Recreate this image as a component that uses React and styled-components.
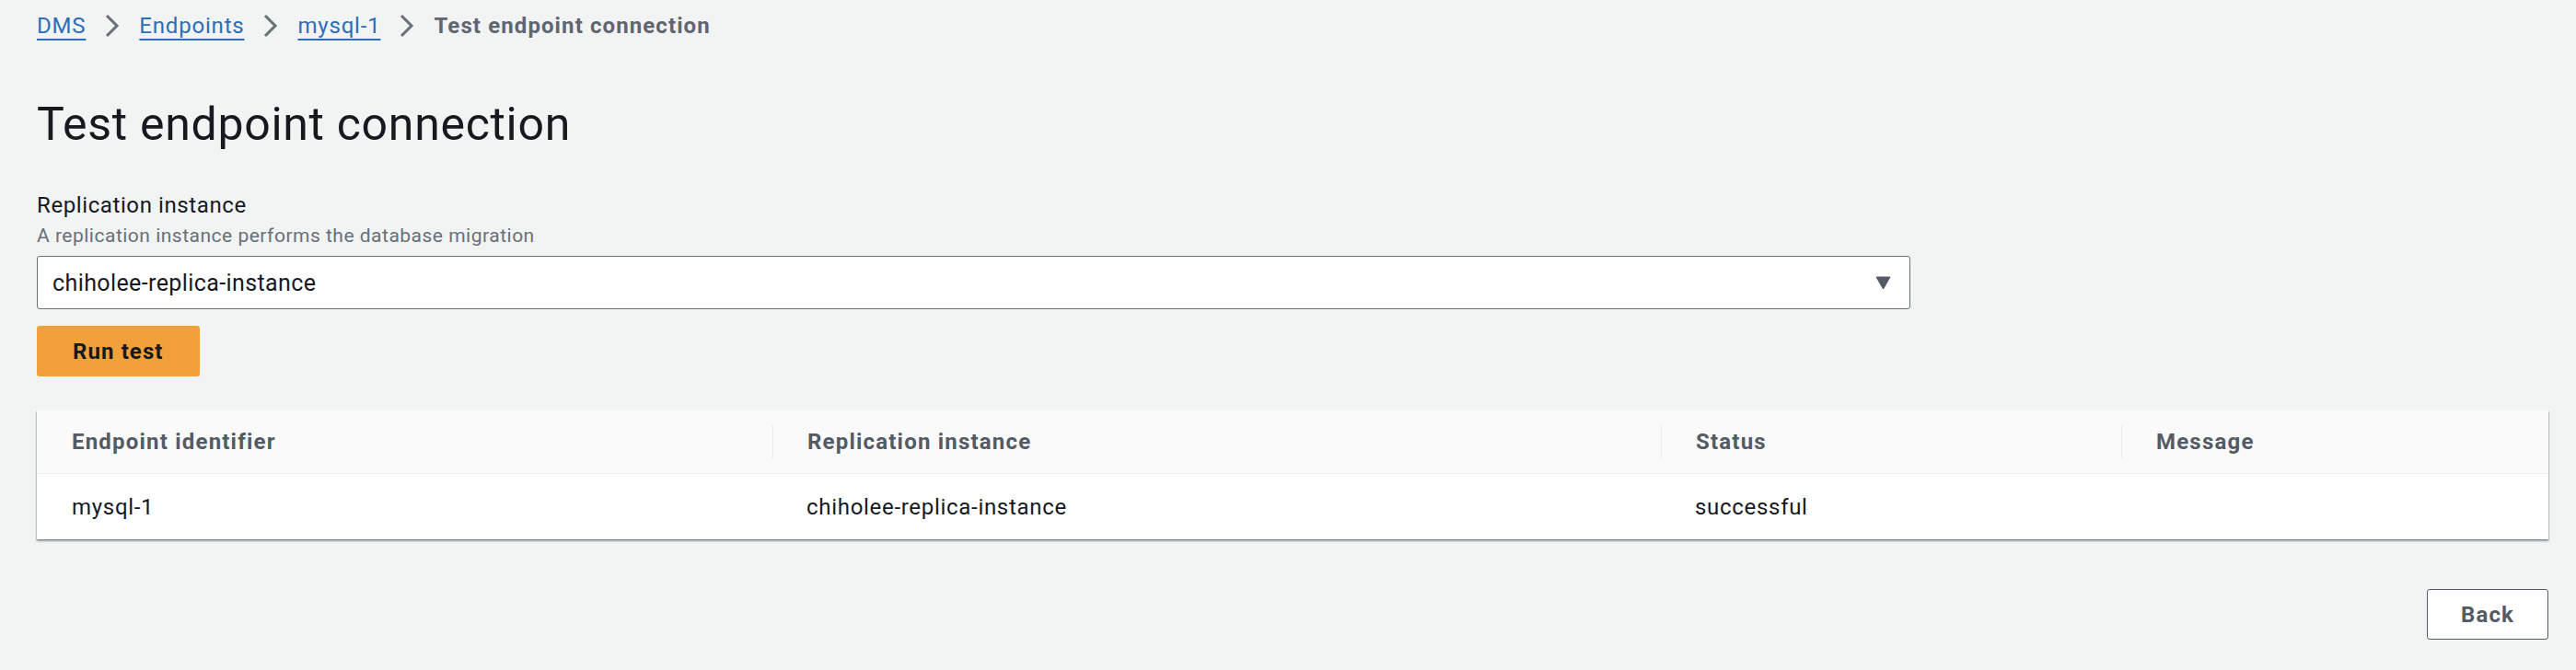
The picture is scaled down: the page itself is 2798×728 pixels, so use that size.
import { createGlobalStyle, styled } from "styled-components";

const GlobalStyle = createGlobalStyle`
  html, body {
    margin: 0;
    padding: 0;
    background: #f2f3f3;
  }
  body {
    font-family: Roboto, "Liberation Sans", sans-serif;
    color: #16191f;
    letter-spacing: 0.5px;
  }
`;

const Page = styled.main`
  box-sizing: border-box;
  height: 728px;
  padding: 10px 30px 0 40px;
  display: flex;
  flex-direction: column;
`;

const Crumbs = styled.nav`
  display: flex;
  align-items: center;
  height: 36px;
  font-size: 24px;
  line-height: 36px;
`;

const CrumbLink = styled.a`
  color: #2d6eb9;
  letter-spacing: 0.8px;
  text-decoration: underline;
  text-decoration-thickness: 2px;
  text-underline-offset: 6px;
`;

const CrumbCurrent = styled.span`
  color: #5f6670;
  font-weight: 700;
  letter-spacing: 1.1px;
`;

const Chevron = styled.svg`
  width: 17px;
  height: 26px;
  margin: 0 21px 0 20px;
  flex: none;
`;

const Title = styled.h1`
  margin: 59px 0 0;
  font-size: 50px;
  line-height: 60px;
  font-weight: 400;
  letter-spacing: 0.7px;
  color: #16191f;
`;

const Label = styled.div`
  margin-top: 41px;
  font-size: 24px;
  line-height: 34px;
  letter-spacing: 0.6px;
`;

const Hint = styled.div`
  margin-top: 2px;
  font-size: 21px;
  line-height: 28px;
  color: #687078;
`;

const Select = styled.div`
  box-sizing: border-box;
  margin-top: 8px;
  width: 2035px;
  height: 58px;
  display: flex;
  align-items: center;
  justify-content: space-between;
  padding: 0 20px 0 16px;
  background: #fff;
  border: 1.5px solid #687078;
  border-radius: 3px;
  font-size: 25px;
  letter-spacing: 0.4px;
`;

const Caret = styled.svg`
  width: 17px;
  height: 14px;
`;

const Button = styled.button`
  box-sizing: border-box;
  height: 55px;
  padding: 0 ${(p) => p.$pad}px;
  font-family: inherit;
  font-size: 24px;
  font-weight: 700;
  letter-spacing: 1.1px;
  border-radius: 3px;
  border: ${(p) => (p.$primary ? "none" : "1.5px solid #545b64")};
  background: ${(p) => (p.$primary ? "#f2a13a" : "#fff")};
  color: ${(p) => (p.$primary ? "#16191f" : "#545b64")};
`;

const RunRow = styled.div`
  margin-top: 18px;
  display: flex;
`;

const Table = styled.div`
  margin-top: 37px;
  background: #fff;
  box-shadow: 0 2px 2px 0 rgba(0, 28, 36, 0.35), 1px 1px 1px 0 rgba(0, 28, 36, 0.12),
    -1px 1px 1px 0 rgba(0, 28, 36, 0.12);
`;

const Row = styled.div`
  display: grid;
  grid-template-columns: 799px 965px 500px 1fr;
  height: ${(p) => (p.$head ? 68 : 71)}px;
  background: ${(p) => (p.$head ? "#fafafa" : "#fff")};
  border-bottom: ${(p) => (p.$head ? "1px solid #eaeded" : "none")};
`;

const Cell = styled.div`
  display: flex;
  align-items: center;
  padding-left: ${(p) => (p.$first ? 38 : 37)}px;
  font-size: 24px;
  font-weight: ${(p) => (p.$head ? 700 : 400)};
  letter-spacing: ${(p) => (p.$head ? 1.2 : 0.7)}px;
  color: ${(p) => (p.$head ? "#545b64" : "#16191f")};
  border-left: ${(p) => (p.$divider ? "1px solid #eaeded" : "none")};
  margin: ${(p) => (p.$divider ? "16px 0" : "0")};
`;

const Footer = styled.div`
  margin-top: 54px;
  display: flex;
  justify-content: flex-end;
`;

const columns = ["Endpoint identifier", "Replication instance", "Status", "Message"];
const results = [["mysql-1", "chiholee-replica-instance", "successful", ""]];

function Sep() {
  return (
    <Chevron viewBox="0 0 17 26" fill="none">
      <path d="M3 2l11 11L3 24" stroke="#687078" strokeWidth="3" />
    </Chevron>
  );
}

export default function App() {
  return (
    <>
      <GlobalStyle />
      <Page>
        <Crumbs>
          <CrumbLink>DMS</CrumbLink>
          <Sep />
          <CrumbLink>Endpoints</CrumbLink>
          <Sep />
          <CrumbLink>mysql-1</CrumbLink>
          <Sep />
          <CrumbCurrent>Test endpoint connection</CrumbCurrent>
        </Crumbs>

        <Title>Test endpoint connection</Title>

        <Label>Replication instance</Label>
        <Hint>A replication instance performs the database migration</Hint>
        <Select>
          <span>chiholee-replica-instance</span>
          <Caret viewBox="0 0 17 14">
            <path d="M1 1h15l-7.5 13z" fill="#545b64" strokeLinejoin="round" stroke="#545b64" />
          </Caret>
        </Select>

        <RunRow>
          <Button $primary $pad={39}>Run test</Button>
        </RunRow>

        <Table>
          <Row $head>
            {columns.map((c, i) => (
              <Cell key={c} $head $first={i === 0} $divider={i > 0}>
                {c}
              </Cell>
            ))}
          </Row>
          {results.map((r) => (
            <Row key={r[0]}>
              {r.map((v, i) => (
                <Cell key={i} $first={i === 0}>
                  {v}
                </Cell>
              ))}
            </Row>
          ))}
        </Table>

        <Footer>
          <Button $pad={36}>Back</Button>
        </Footer>
      </Page>
    </>
  );
}
